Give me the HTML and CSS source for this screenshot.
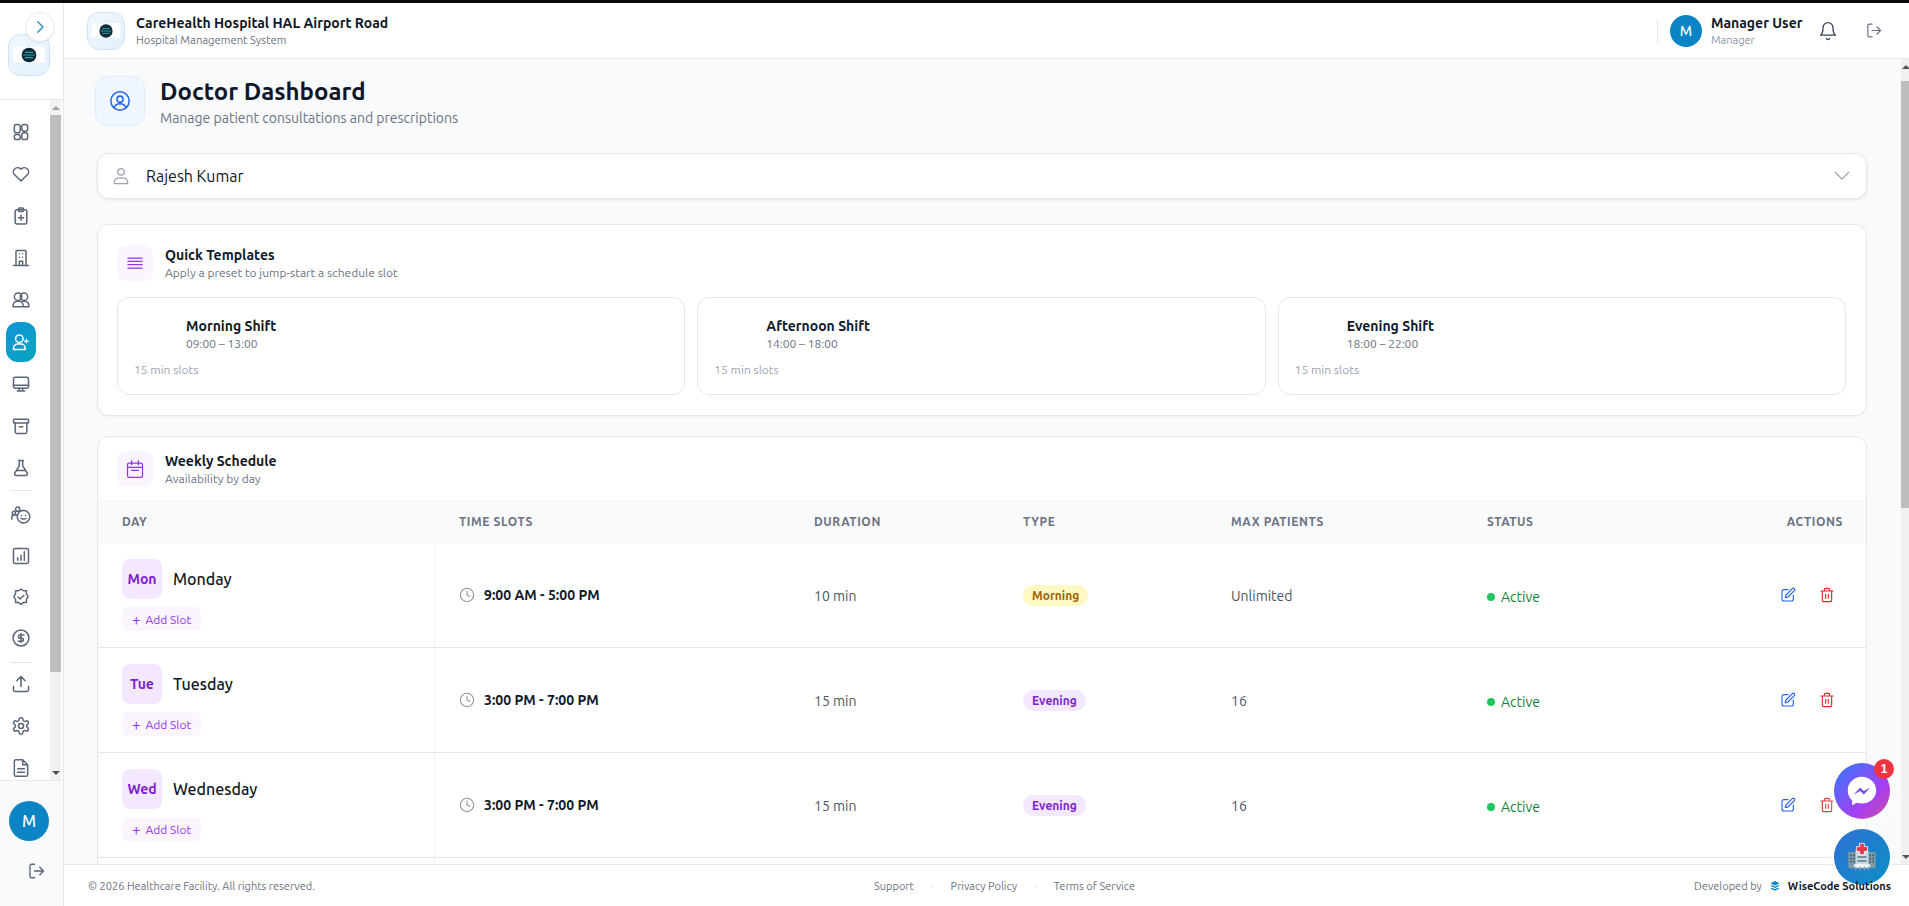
FILE: index.html
```html
<!DOCTYPE html>
<html lang="en">
<head>
<meta charset="utf-8">
<title>Doctor Dashboard</title>
<link rel="stylesheet" href="styles.css">
</head>
<body>
<svg class="defs" width="0" height="0" aria-hidden="true">
  <symbol id="logo" viewBox="0 0 38 38">
    <rect x="4" y="11" width="30" height="15" fill="#fff"/>
    <circle cx="19" cy="19" r="7" fill="#0f2a3a"/>
    <path d="M15.500 16.500h7M14 19h10M15.500 21.500h7" stroke="#2aa6a6" stroke-width="1" fill="none"/>
  </symbol>
</svg>
<div class="topstrip"></div>
<div class="app">
  <aside class="sidebar">
    <div class="side-top">
      <button class="toggle"><svg viewBox="0 0 24 24" class="ico-toggle"><path d="m9 5 7 7-7 7"/></svg></button>
      <div class="logo-tile logo-side"><svg width="40" height="40"><use href="#logo"/></svg></div>
    </div>
    <div class="side-scroll">
      <nav class="side-nav">
        <a class="nav"><svg viewBox="0 0 24 24"><rect x="4" y="3" width="7" height="10" rx="2.500"/><rect x="13" y="3" width="7" height="8" rx="2.500"/><rect x="13" y="13" width="7" height="8" rx="2.500"/><rect x="4" y="15" width="7" height="6" rx="2.500"/></svg></a>
        <a class="nav"><svg viewBox="0 0 24 24"><path d="M12 20.500 4.400 13a5 5 0 0 1 7-7.200l.6.6.6-.6a5 5 0 0 1 7 7.200z"/></svg></a>
        <a class="nav"><svg viewBox="0 0 24 24"><rect x="5" y="4.500" width="14" height="17" rx="2"/><rect x="9" y="2.500" width="6" height="4" rx="1"/><path d="M12 11v6M9 14h6"/></svg></a>
        <a class="nav"><svg viewBox="0 0 24 24"><path d="M6 21V4a1 1 0 0 1 1-1h10a1 1 0 0 1 1 1v17M3 21h18M10 21v-5h4v5M10 7h.01M14 7h.01M10 11h.01M14 11h.01"/></svg></a>
        <a class="nav"><svg viewBox="0 0 24 24"><circle cx="8.500" cy="8" r="4.500"/><circle cx="15.500" cy="8" r="4.500"/><path d="M2.500 20v-1.500a5 5 0 0 1 5-5h2a5 5 0 0 1 5 5V20zM14 13.500h2.500a5 5 0 0 1 5 5V20h-7"/></svg></a>
        <a class="nav nav-active"><svg viewBox="0 0 24 24"><circle cx="10" cy="8" r="4.500"/><path d="M3 21v-1.500a5 5 0 0 1 5-5h4a5 5 0 0 1 5 5V21zM18.500 9v4M16.500 11h4"/></svg></a>
        <a class="nav"><svg viewBox="0 0 24 24"><rect x="3" y="4" width="18" height="13" rx="2"/><path d="M3 13.500h18M10 17v3.500M14 17v3.500M7.500 20.500h9"/></svg></a>
        <a class="nav"><svg viewBox="0 0 24 24"><rect x="3" y="4" width="18" height="4.500" rx="1"/><path d="M5 8.500V19a2 2 0 0 0 2 2h10a2 2 0 0 0 2-2V8.500M10 13h4"/></svg></a>
        <a class="nav"><svg viewBox="0 0 24 24"><path d="M9 3h6M10 3v6.500L4.500 18a2 2 0 0 0 1.700 3h11.600a2 2 0 0 0 1.700-3L14 9.500V3M7 15h10"/></svg></a>
        <div class="nav-sep"></div>
        <a class="nav nav-tight"><svg viewBox="0 0 24 24"><circle cx="8" cy="5" r="2.500"/><circle cx="3.500" cy="9.500" r="2"/><path d="M1 17v-2.500a2.500 2.500 0 0 1 2.500-2.500H8"/><circle cx="15" cy="14" r="7.500" stroke-dasharray="3 .8"/><path d="M12.500 12.500h.01M17.500 12.500h.01M12 16c1.500 1.500 4.500 1.500 6 0"/></svg></a>
        <a class="nav nav-tight"><svg viewBox="0 0 24 24"><rect x="3" y="3" width="18" height="18" rx="2"/><path d="M8 17v-3M12 17V11M16 17V7"/></svg></a>
        <a class="nav nav-tight"><svg viewBox="0 0 24 24"><path d="M12 2.500 15 4.500h3.500v3.500l2 3.500-2 3.500v3.500H15l-3 2.500-3-2.500H5.500V15l-2-3.500 2-3.500V4.500H9z" stroke-linejoin="round"/><path d="m8.500 12 2.500 2.500 4.500-4.500"/></svg></a>
        <a class="nav nav-tight"><svg viewBox="0 0 24 24"><circle cx="12" cy="12" r="9.500"/><path d="M15.500 8.500H10.800a1.800 1.800 0 0 0 0 3.700h2.400a1.800 1.800 0 0 1 0 3.600H8.500M12 6.500v11"/></svg></a>
        <div class="nav-sep nav-sep-b"></div>
        <a class="nav"><svg viewBox="0 0 24 24"><path d="M12 15V3M7 8l5-5 5 5M3 15v4a2 2 0 0 0 2 2h14a2 2 0 0 0 2-2v-4"/></svg></a>
        <a class="nav"><svg viewBox="0 0 24 24"><path d="M12.200 2h-.4a2 2 0 0 0-2 2v.2a2 2 0 0 1-1 1.700l-.4.3a2 2 0 0 1-2 0l-.2-.1a2 2 0 0 0-2.700.7l-.2.400a2 2 0 0 0 .7 2.700l.2.100a2 2 0 0 1 1 1.700v.5a2 2 0 0 1-1 1.700l-.2.100a2 2 0 0 0-.7 2.700l.2.400a2 2 0 0 0 2.700.7l.2-.1a2 2 0 0 1 2 0l.4.300a2 2 0 0 1 1 1.700v.2a2 2 0 0 0 2 2h.4a2 2 0 0 0 2-2v-.2a2 2 0 0 1 1-1.700l.4-.3a2 2 0 0 1 2 0l.2.100a2 2 0 0 0 2.700-.7l.2-.4a2 2 0 0 0-.7-2.700l-.2-.1a2 2 0 0 1-1-1.700v-.5a2 2 0 0 1 1-1.700l.2-.1a2 2 0 0 0 .7-2.700l-.2-.4a2 2 0 0 0-2.700-.7l-.2.100a2 2 0 0 1-2 0l-.4-.3a2 2 0 0 1-1-1.700V4a2 2 0 0 0-2-2z"/><circle cx="12" cy="12" r="3"/></svg></a>
        <a class="nav"><svg viewBox="0 0 24 24"><path d="M14 2H6a2 2 0 0 0-2 2v16a2 2 0 0 0 2 2h12a2 2 0 0 0 2-2V8zM14 2v6h6M8 13h8M8 17h8"/></svg></a>
      </nav>
      <div class="vbar vbar-side">
        <span class="arrow-up"></span>
        <span class="thumb"></span>
        <span class="arrow-down"></span>
      </div>
    </div>
    <div class="side-foot">
      <div class="avatar avatar-lg">M</div>
      <svg class="foot-logout" viewBox="0 0 24 24"><path d="M10 3H6a2 2 0 0 0-2 2v14a2 2 0 0 0 2 2h4M10 12h11M17 7l5 5-5 5"/></svg>
    </div>
  </aside>

  <div class="right">
    <header class="topbar">
      <div class="brand">
        <div class="logo-tile logo-head"><svg width="36" height="36"><use href="#logo"/></svg></div>
        <div>
          <div class="brand-name">CareHealth Hospital HAL Airport Road</div>
          <div class="brand-sub">Hospital Management System</div>
        </div>
      </div>
      <div class="user-area">
        <div class="avatar">M</div>
        <div class="user-text">
          <div class="user-name">Manager User</div>
          <div class="user-role">Manager</div>
        </div>
        <svg class="bell" viewBox="0 0 24 24"><path d="M6 8a6 6 0 0 1 12 0c0 7 3 9 3 9H3s3-2 3-9M10 21a2.200 2.200 0 0 0 4 0"/></svg>
        <svg class="head-logout" viewBox="0 0 24 24"><path d="M10 3H6a2 2 0 0 0-2 2v14a2 2 0 0 0 2 2h4M10 12h11M17 7l5 5-5 5"/></svg>
      </div>
    </header>

    <div class="scroller">
      <main class="main">
        <section class="page-head">
          <div class="page-icon"><svg viewBox="0 0 24 24"><circle cx="12" cy="12" r="10"/><circle cx="12" cy="10" r="3.300"/><path d="M5.500 19.500c.8-3 3.200-4.500 6.500-4.500s5.700 1.500 6.500 4.500"/></svg></div>
          <div>
            <h1 class="page-title">Doctor Dashboard</h1>
            <p class="page-sub">Manage patient consultations and prescriptions</p>
          </div>
        </section>

        <div class="select">
          <svg class="select-user" viewBox="0 0 24 24"><circle cx="12" cy="7" r="4"/><path d="M4 21v-1.500a5 5 0 0 1 5-5h6a5 5 0 0 1 5 5V21z"/></svg>
          <span class="select-value">Rajesh Kumar</span>
          <svg class="select-chev" viewBox="0 0 24 24"><path d="m3 7 9 9 9-9"/></svg>
        </div>

        <section class="card card-templates">
          <div class="card-head">
            <div class="card-icon"><svg viewBox="0 0 24 24" class="ico-lines"><path d="M3.500 6h17M3.500 10h17M3.500 14h17M3.500 18h17"/></svg></div>
            <div>
              <div class="card-title">Quick Templates</div>
              <div class="card-sub">Apply a preset to jump-start a schedule slot</div>
            </div>
          </div>
          <div class="templates">
            <div class="template">
              <div class="t-name">Morning Shift</div>
              <div class="t-time">09:00 – 13:00</div>
              <div class="t-slots">15 min slots</div>
            </div>
            <div class="template">
              <div class="t-name">Afternoon Shift</div>
              <div class="t-time">14:00 – 18:00</div>
              <div class="t-slots">15 min slots</div>
            </div>
            <div class="template">
              <div class="t-name">Evening Shift</div>
              <div class="t-time">18:00 – 22:00</div>
              <div class="t-slots">15 min slots</div>
            </div>
          </div>
        </section>

        <section class="card card-week">
          <div class="card-head card-head-week">
            <div class="card-icon"><svg viewBox="0 0 24 24" class="ico-cal"><rect x="3" y="5" width="18" height="17" rx="2"/><path d="M8 2v5M16 2v5M3 10h18M8 13.500h8"/></svg></div>
            <div>
              <div class="card-title">Weekly Schedule</div>
              <div class="card-sub">Availability by day</div>
            </div>
          </div>
          <div class="row row-head">
            <div>DAY</div><div>TIME SLOTS</div><div>DURATION</div><div>TYPE</div><div>MAX PATIENTS</div><div>STATUS</div><div class="right-text">ACTIONS</div>
          </div>

          <div class="row">
            <div class="day-cell">
              <div class="day-line"><span class="chip">Mon</span><span class="day-name">Monday</span></div>
              <span class="add-slot"><span class="plus">+</span>Add Slot</span>
            </div>
            <div class="time"><svg viewBox="0 0 24 24"><circle cx="12" cy="12" r="10"/><path d="M12 6v6l4 2"/></svg>9:00 AM - 5:00 PM</div>
            <div class="plain">10 min</div>
            <div><span class="pill pill-morning">Morning</span></div>
            <div class="plain">Unlimited</div>
            <div class="status"><i></i>Active</div>
            <div class="actions">
              <svg class="edit" viewBox="0 0 24 24"><path d="M12 4H6a3 3 0 0 0-3 3v11a3 3 0 0 0 3 3h11a3 3 0 0 0 3-3v-6"/><path d="M18.500 2.500a2.100 2.100 0 0 1 3 3L12 15l-4 1 1-4z"/></svg>
              <svg class="trash" viewBox="0 0 24 24"><path d="M3 6h18M19 6v14a2 2 0 0 1-2 2H7a2 2 0 0 1-2-2V6M8 6V4a2 2 0 0 1 2-2h4a2 2 0 0 1 2 2v2M10 11v6M14 11v6"/></svg>
            </div>
          </div>

          <div class="row">
            <div class="day-cell">
              <div class="day-line"><span class="chip">Tue</span><span class="day-name">Tuesday</span></div>
              <span class="add-slot"><span class="plus">+</span>Add Slot</span>
            </div>
            <div class="time"><svg viewBox="0 0 24 24"><circle cx="12" cy="12" r="10"/><path d="M12 6v6l4 2"/></svg>3:00 PM - 7:00 PM</div>
            <div class="plain">15 min</div>
            <div><span class="pill pill-evening">Evening</span></div>
            <div class="plain">16</div>
            <div class="status"><i></i>Active</div>
            <div class="actions">
              <svg class="edit" viewBox="0 0 24 24"><path d="M12 4H6a3 3 0 0 0-3 3v11a3 3 0 0 0 3 3h11a3 3 0 0 0 3-3v-6"/><path d="M18.500 2.500a2.100 2.100 0 0 1 3 3L12 15l-4 1 1-4z"/></svg>
              <svg class="trash" viewBox="0 0 24 24"><path d="M3 6h18M19 6v14a2 2 0 0 1-2 2H7a2 2 0 0 1-2-2V6M8 6V4a2 2 0 0 1 2-2h4a2 2 0 0 1 2 2v2M10 11v6M14 11v6"/></svg>
            </div>
          </div>

          <div class="row">
            <div class="day-cell">
              <div class="day-line"><span class="chip">Wed</span><span class="day-name">Wednesday</span></div>
              <span class="add-slot"><span class="plus">+</span>Add Slot</span>
            </div>
            <div class="time"><svg viewBox="0 0 24 24"><circle cx="12" cy="12" r="10"/><path d="M12 6v6l4 2"/></svg>3:00 PM - 7:00 PM</div>
            <div class="plain">15 min</div>
            <div><span class="pill pill-evening">Evening</span></div>
            <div class="plain">16</div>
            <div class="status"><i></i>Active</div>
            <div class="actions">
              <svg class="edit" viewBox="0 0 24 24"><path d="M12 4H6a3 3 0 0 0-3 3v11a3 3 0 0 0 3 3h11a3 3 0 0 0 3-3v-6"/><path d="M18.500 2.500a2.100 2.100 0 0 1 3 3L12 15l-4 1 1-4z"/></svg>
              <svg class="trash" viewBox="0 0 24 24"><path d="M3 6h18M19 6v14a2 2 0 0 1-2 2H7a2 2 0 0 1-2-2V6M8 6V4a2 2 0 0 1 2-2h4a2 2 0 0 1 2 2v2M10 11v6M14 11v6"/></svg>
            </div>
          </div>
          <div class="row row-stub"><div class="day-cell"></div></div>
        </section>
      </main>
      <div class="vbar vbar-main">
        <span class="arrow-up"></span>
        <span class="thumb"></span>
        <span class="arrow-down"></span>
      </div>
    </div>

    <footer class="footer">
      <div class="foot-copy">© 2026 Healthcare Facility. All rights reserved.</div>
      <div class="foot-links"><span>Support</span><em>·</em><span>Privacy Policy</span><em>·</em><span>Terms of Service</span></div>
      <div class="foot-dev">Developed by
        <svg class="wise" viewBox="0 0 24 24"><path d="M12 2 3 6.500 12 11l9-4.500zM3 11.500 12 16l9-4.500-3-1.500-6 3-6-3zM3 17l9 4.500L21 17l-3-1.500-6 3-6-3z"/></svg>
        <b>WiseCode Solutions</b></div>
    </footer>
  </div>
</div>

<button class="fab fab-msg">
  <svg viewBox="0 0 32 32" width="38" height="38"><path d="M16 4C9.200 4 4 9 4 15.500c0 3.400 1.400 6.300 3.700 8.300v4.200l3.900-2.200c1.400.4 2.900.7 4.400.7 6.800 0 12-5 12-11S22.800 4 16 4z" fill="#fff"/><path d="m9 19 5.500-6 3 3 5.500-3-5.500 6-3-3z" fill="#7c4dea"/></svg>
  <span class="badge">1</span>
</button>
<button class="fab fab-hosp">
  <svg viewBox="0 0 40 40" width="32" height="32">
    <rect x="3" y="14" width="11" height="20" fill="#7f9aa8"/><rect x="26" y="14" width="11" height="20" fill="#7f9aa8"/>
    <rect x="12" y="12" width="16" height="22" fill="#c9dbe2"/>
    <path d="M5 17h2v2H5zM9 17h2v2H9zM5 21h2v2H5zM9 21h2v2H9zM5 25h2v2H5zM9 25h2v2H9zM29 17h2v2h-2zM33 17h2v2h-2zM29 21h2v2h-2zM33 21h2v2h-2zM29 25h2v2h-2zM33 25h2v2h-2z" fill="#3d5562"/>
    <path d="M17 3h6v4h4v6h-4v4h-6v-4h-4V7h4z" fill="#e5394b" stroke="#fff" stroke-width="1"/>
    <path d="M15 20h10M15 25h10" stroke="#5b7685" stroke-width="2"/>
    <rect x="10" y="29" width="20" height="4" fill="#eef5f7"/>
    <path d="M12 33v3M17 33v3M23 33v3M28 33v3" stroke="#7f9aa8" stroke-width="2"/>
  </svg>
</button>
</body>
</html>
```

FILE: styles.css
```css
* { box-sizing: border-box; }
html, body { height: 100%; margin: 0; }
body {
  position: relative;
  overflow: hidden;
  font-family: "Ubuntu", "Noto Sans", sans-serif;
  color: #111827;
  background: #fff;
  display: flex;
  flex-direction: column;
}
.defs { position: absolute; }
svg { fill: none; stroke: currentColor; stroke-width: 2; stroke-linecap: round; stroke-linejoin: round; display: block; flex: none; }
use { stroke: none; }
.topstrip { height: 3px; background: #0a0a0a; flex: none; }
.app { flex: 1; display: flex; min-height: 0; }

.sidebar {
  width: 64px; flex: none; display: flex; flex-direction: column;
  background: #fff; border-right: 1px solid #e5e7eb; position: relative; z-index: 2;
}
.side-top { height: 97px; flex: none; border-bottom: 1px solid #e5e7eb; position: relative; padding: 31px 0 0 8px; }
.toggle {
  position: absolute; left: 25px; top: 9px; width: 30px; height: 30px; border-radius: 50%;
  background: #fff; border: 1px solid #e5e7eb; padding: 0; display: flex; align-items: center; justify-content: center;
  box-shadow: 0 1px 2px rgba(0,0,0,.05); z-index: 1;
}
.ico-toggle { width: 18px; height: 18px; color: #1d8fc4; stroke-width: 1.800; }
.logo-tile {
  border-radius: 12px; border: 1px solid #cfe3f6;
  background: linear-gradient(135deg, #f0f7ff, #e4f0fc);
  display: flex; align-items: center; justify-content: center;
}
.logo-side { width: 42px; height: 42px; }
.logo-head { width: 38px; height: 38px; }

.side-scroll { flex: 1; min-height: 0; display: flex; overflow: hidden; }
.side-nav { width: 50px; flex: none; display: flex; flex-direction: column; align-items: flex-start; padding: 12px 0 0 6px; }
.nav {
  width: 30px; height: 40px; flex: none; margin-bottom: 2px; border-radius: 12px;
  display: flex; align-items: center; justify-content: center; color: #5b6578;
}
.nav-tight { margin-bottom: 1px; }
.nav svg { width: 20px; height: 20px; stroke-width: 1.800; }
.nav-active { background: linear-gradient(135deg, #1196d6, #06a5bd); color: #fff; }
.nav-sep { width: 22px; height: 1px; background: #e5e7eb; flex: none; margin: 0 0 4px 4px; }
.nav-sep-b { margin: 3px 0 1px 4px; }

.vbar { flex: none; display: flex; flex-direction: column; background: #f1f1f1; }
.vbar-side { width: 11px; }
.vbar-main { width: 8px; }
.thumb { display: block; background: #bdbdbd; }
.vbar-side .thumb { height: 557px; }
.vbar-main .thumb { height: 427px; margin-top: 7px; }
.arrow-up, .arrow-down { display: flex; height: 15px; flex: none; align-items: center; justify-content: center; }
.arrow-up::before { content: ""; border: 4px solid transparent; border-top: 0; border-bottom: 4px solid #a3a3a3; }
.arrow-down { margin-top: auto; }
.arrow-down::before { content: ""; border: 4px solid transparent; border-bottom: 0; border-top: 4px solid #505050; }
.vbar-main .arrow-up::before { border-bottom-color: #505050; }
.vbar-main .arrow-up, .vbar-main .arrow-down { justify-content: flex-start; padding-left: 1px; }

.side-foot { height: 126px; flex: none; border-top: 1px solid #e5e7eb; background: #f8fafc; padding: 20px 0 0 9px; }
.avatar {
  width: 32px; height: 32px; border-radius: 50%; background: #0b84c6; color: #fff;
  display: flex; align-items: center; justify-content: center; font-weight: 500; font-size: 14px; flex: none;
}
.avatar-lg { width: 40px; height: 40px; font-size: 16px; }
.foot-logout { width: 18px; height: 18px; color: #5b6578; margin: 21px 0 0 18px; stroke-width: 1.800; }

.right { flex: 1; min-width: 0; display: flex; flex-direction: column; }
.topbar {
  height: 56px; flex: none; background: #fff; border-bottom: 1px solid #e5e7eb;
  display: flex; align-items: center; justify-content: space-between; padding: 0 27px 0 23px;
}
.brand { display: flex; align-items: center; gap: 11px; }
.brand-name { font-size: 14px; font-weight: 600; line-height: 18px; color: #111827; }
.brand-sub { font-size: 11.250px; line-height: 15px; color: #6b7280; margin-top: 1px; }
.user-area { display: flex; align-items: center; }
.user-area::before { content: ""; width: 1px; height: 24px; background: #e5e7eb; margin-right: 12px; }
.user-text { margin: 0 0 0 9px; width: 107px; }
.user-name { font-size: 14px; font-weight: 600; line-height: 18px; }
.user-role { font-size: 11px; line-height: 15px; color: #8b95a5; margin-top: 1px; }
.bell { width: 20px; height: 20px; color: #374151; stroke-width: 1.600; }
.head-logout { width: 17px; height: 17px; color: #6b7280; margin-left: 27px; stroke-width: 1.700; }

.scroller { flex: 1; min-height: 0; display: flex; overflow: hidden; background: #f8fafc; }
.main { flex: 1; min-width: 0; padding: 17px 34px 0 33px; overflow: hidden; }
.page-head { display: flex; gap: 15px; align-items: flex-start; height: 77px; }
.page-icon {
  width: 50px; height: 50px; flex: none; margin-left: -2px; border-radius: 12px; background: #eff6ff; border: 1px solid #e3edf9;
  display: flex; align-items: center; justify-content: center; color: #2563eb;
}
.page-icon svg { width: 22px; height: 22px; stroke-width: 1.700; }
.page-title { margin: 0; font-size: 24px; line-height: 32px; font-weight: 700; color: #0f172a; }
.page-sub { margin: 0; font-size: 14px; line-height: 20px; color: #6b7280; }

.select {
  height: 46px; background: #fff; border: 1px solid #e5e7eb; border-radius: 12px;
  box-shadow: 0 1px 3px rgba(0,0,0,.08); display: flex; align-items: center; padding: 0 15px 0 13px;
}
.select-user { width: 20px; height: 20px; color: #9ca3af; stroke-width: 1.500; }
.select-value { margin-left: 15px; font-size: 16px; color: #111827; flex: 1; }
.select-chev { width: 18px; height: 18px; color: #9ca3af; stroke-width: 1.500; }

.card { background: #fff; border: 1px solid #e5e7eb; border-radius: 12px; }
.card-templates { margin-top: 25px; height: 192px; padding: 20px 20px 0 19px; box-shadow: 0 1px 2px rgba(0,0,0,.04); }
.card-head { display: flex; align-items: center; gap: 12px; }
.card-icon { width: 36px; height: 36px; flex: none; border-radius: 9px; background: #faf5ff; display: flex; align-items: center; justify-content: center; color: #9333ea; }
.card-icon svg { width: 20px; height: 20px; stroke-width: 1.500; }
.card-title { font-size: 14px; font-weight: 600; line-height: 18px; color: #111827; }
.card-sub { font-size: 12px; line-height: 15px; color: #6b7280; margin-top: 1px; }
.templates { display: grid; grid-template-columns: repeat(3, 1fr); gap: 12px; margin-top: 16px; }
.template { height: 98px; border: 1px solid #e5e7eb; border-radius: 12px; padding: 19px 16px 0 16px; background: #fff; }
.t-name { margin-left: 52px; font-size: 14px; font-weight: 600; line-height: 18px; }
.t-time { margin-left: 52px; font-size: 12px; line-height: 15px; color: #6b7280; margin-top: 1px; }
.t-slots { font-size: 12px; line-height: 15px; color: #9ca3af; margin-top: 11px; }

.card-week { margin-top: 20px; border-bottom-left-radius: 0; border-bottom-right-radius: 0; }
.card-head-week { height: 64px; padding-left: 19px; gap: 12px; border-bottom: 1px solid #f1f5f9; align-items: center; }
.row {
  display: grid; grid-template-columns: 337px 355px 209px 208px 256px 1fr 200px; align-items: center;
  height: 105px; border-bottom: 1px solid #e5e7eb; font-size: 14px;
}
.row > div { padding-left: 24px; }
.row > .actions { padding-left: 0; padding-right: 31px; }
.row-head {
  height: 42px; background: #f8fafc; border-bottom: 1px solid #f1f5f9; font-size: 12px; font-weight: 600; color: #6b7280; letter-spacing: .6px;
}
.row-head > div:last-child { padding-right: 23px; }
.right-text { text-align: right; }
.day-cell { height: 100%; border-right: 1px solid #f1f5f9; padding-top: 16px; }
.day-line { display: flex; align-items: center; gap: 11px; }
.chip { width: 40px; height: 40px; border-radius: 8px; background: #f3e8ff; color: #7e22ce; font-size: 14px; font-weight: 600; display: flex; align-items: center; justify-content: center; }
.day-name { font-size: 16px; font-weight: 500; color: #111827; }
.add-slot { display: inline-flex; align-items: center; margin-top: 8px; height: 24px; padding: 0 10px; border-radius: 6px; background: #faf5ff; color: #9333ea; font-size: 12px; }
.plus { margin-right: 5px; font-size: 15px; line-height: 1; }
.time { display: flex; align-items: center; gap: 9px; font-weight: 600; color: #111827; }
.time svg { width: 16px; height: 16px; color: #8d939c; stroke-width: 1.600; }
.plain { color: #4b5563; padding-top: 2px; }
.pill { display: inline-block; height: 21px; padding: 0 9px; line-height: 21px; border-radius: 11px; font-size: 12px; font-weight: 600; }
.pill-morning { background: #fef9c3; color: #a16207; }
.pill-evening { background: #f3e8ff; color: #7e22ce; }
.status { display: flex; align-items: center; gap: 6px; color: #15803d; padding-top: 3px; }
.status i { width: 8px; height: 8px; border-radius: 50%; background: #22c55e; }
.actions { display: flex; justify-content: flex-end; gap: 23px; }
.actions svg { width: 16px; height: 16px; stroke-width: 1.700; }
.edit { color: #2563eb; }
.trash { color: #dc2626; }
.row-stub { height: 10px; border-bottom: 0; }
.row-stub .day-cell { padding: 0; }

.footer {
  height: 42px; flex: none; background: #fff; border-top: 1px solid #e5e7eb; display: flex;
  justify-content: space-between; align-items: center; padding: 0 18px 0 24px; font-size: 11px; color: #6b7280;
}
.foot-links { display: flex; gap: 17px; }
.foot-links em { font-style: normal; color: #cbd5e1; }
.foot-dev { display: flex; justify-content: flex-end; align-items: center; color: #6b7280; }
.wise { width: 12px; height: 12px; margin: 0 7px; fill: #0b84c6; stroke: none; }
.foot-dev b { font-weight: 600; color: #111827; position: relative; z-index: 6; }

.fab {
  position: absolute; width: 56px; height: 56px; border-radius: 50%; border: 0; padding: 0; left: 1834px;
  display: flex; align-items: center; justify-content: center; z-index: 5;
  box-shadow: 0 8px 24px rgba(255,255,255,.6);
}
.fab svg { stroke: none; }
.fab-msg { top: 763px; background: linear-gradient(135deg, #2f7bff, #a63ef0 65%, #d14fa0); }
.fab-hosp { top: 829px; background: linear-gradient(135deg, #2f6fd6, #0c90c4); }
.badge {
  position: absolute; right: -4px; top: -4px; width: 20px; height: 20px; border-radius: 50%; background: #ef3340; color: #fff;
  font: 700 12px/20px "Liberation Sans", sans-serif; text-align: center;
}
```
